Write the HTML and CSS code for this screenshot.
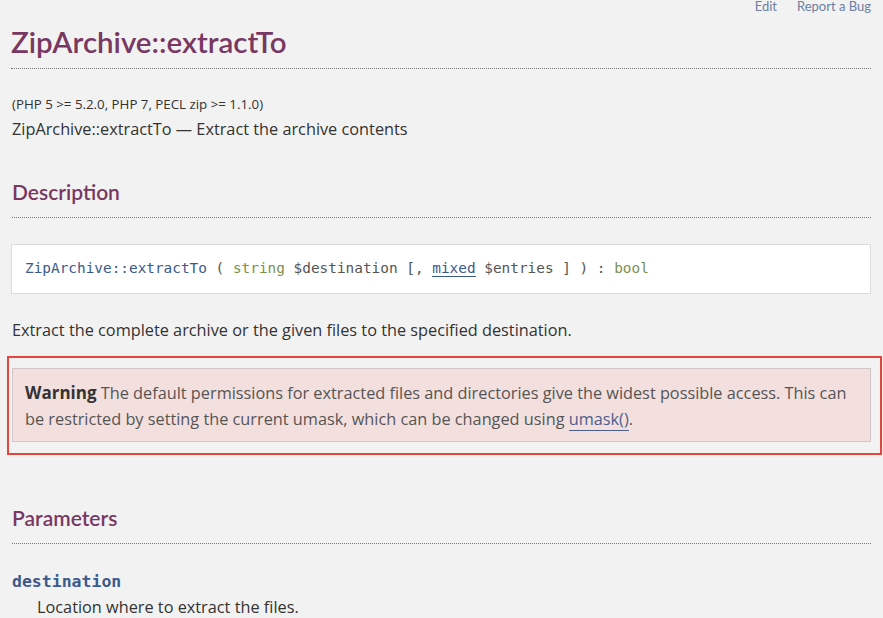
FILE: index.html
```html
<!DOCTYPE html>
<html lang="en">
<head>
<meta charset="utf-8">
<title>ZipArchive::extractTo</title>
<link rel="stylesheet" href="styles.css">
</head>
<body>
<div class="page">
  <nav class="edit-bar">
    <a href="#">Edit</a>
    <a href="#">Report a Bug</a>
  </nav>
  <h1 class="refname">ZipArchive::extractTo</h1>
  <p class="verinfo">(PHP 5 &gt;= 5.2.0, PHP 7, PECL zip &gt;= 1.1.0)</p>
  <p class="refpurpose">ZipArchive::extractTo — Extract the archive contents</p>

  <h2 class="section-title">Description</h2>
  <div class="synopsis">
    <span class="methodname">ZipArchive::extractTo</span> ( <span class="type">string</span> <span class="param">$destination</span> [, <a href="#" class="typelink">mixed</a> <span class="param">$entries</span> ] ) : <span class="type">bool</span>
  </div>
  <p class="para">Extract the complete archive or the given files to the specified destination.</p>

  <div class="highlight">
    <div class="warning">
      <strong class="warning-title">Warning</strong> The default permissions for extracted files and directories give the widest possible access. This can be restricted by setting the current umask, which can be changed using <a href="#" class="fnlink">umask()</a>.
    </div>
  </div>

  <h2 class="section-title params-title">Parameters</h2>
  <dl class="params">
    <dt><code class="parameter">destination</code></dt>
    <dd>Location where to extract the files.</dd>
  </dl>
</div>
</body>
</html>
```

FILE: styles.css
```css
html, body {
  margin: 0;
  padding: 0;
  background: #f2f2f2;
}
body {
  font-family: "Open Sans", "Noto Sans", sans-serif;
  color: #333;
  font-size: 16.3px;
}
.page {
  padding: 0 12px 0 11px;
  overflow: hidden;
}
.edit-bar {
  display: flex;
  justify-content: flex-end;
  gap: 20px;
  height: 12px;
  font-family: Lato, sans-serif;
  font-size: 13px;
  line-height: 12px;
}
.edit-bar a {
  color: #6d7fa3;
  text-decoration: none;
}
.refname {
  margin: 11px 0 0 0;
  padding-bottom: 7px;
  font-family: Lato, sans-serif;
  font-size: 29.5px;
  line-height: 38px;
  font-weight: 600;
  color: #793862;
  border-bottom: 1px dotted #777;
}
.verinfo {
  margin: 26px 0 0 1px;
  font-size: 13.3px;
  line-height: 18px;
}
.refpurpose {
  margin: 4px 0 0 1px;
  line-height: 24px;
}
.section-title {
  margin: 36px 0 0 1px;
  padding-bottom: 10px;
  font-family: Lato, sans-serif;
  font-size: 21px;
  line-height: 30px;
  font-weight: 600;
  color: #793862;
  border-bottom: 1px dotted #777;
}
.synopsis {
  margin-top: 26px;
  background: #fff;
  border: 1px solid #dcdcdc;
  padding: 11px 13px 12px;
  font-family: "DejaVu Sans Mono", monospace;
  font-size: 14.4px;
  line-height: 25px;
  color: #555;
}
.methodname { color: #3b5a8c; }
.type { color: #7d8f4d; }
.param { color: #555; }
.typelink {
  color: #3b5a8c;
  text-decoration: none;
  border-bottom: 1px solid #3b5a8c;
}
.para {
  margin: 23px 0 0 1px;
  line-height: 26px;
}
.highlight {
  margin: 13px -11px 0 -4px;
  border: 2px solid #e3463c;
  padding: 10px 9px 11px 3px;
}
.warning {
  background: #f3dfdd;
  border: 1px solid #d2c6c6;
  padding: 11px 12px 9px;
  line-height: 26px;
  color: #555;
}
.warning-title {
  color: #333;
  font-weight: 700;
  font-size: 17px;
}
.fnlink {
  color: #4a5f8e;
  text-decoration: none;
  border-bottom: 1px solid #4a5f8e;
}
.params-title {
  margin-top: 48px;
}
.params {
  margin: 24px 0 0 1px;
}
.params dt {
  line-height: 26px;
}
.parameter {
  font-family: "DejaVu Sans Mono", monospace;
  font-weight: 700;
  font-size: 16.5px;
  color: #3b5a8c;
}
.params dd {
  margin: 0 0 0 25px;
  line-height: 24px;
}
```
